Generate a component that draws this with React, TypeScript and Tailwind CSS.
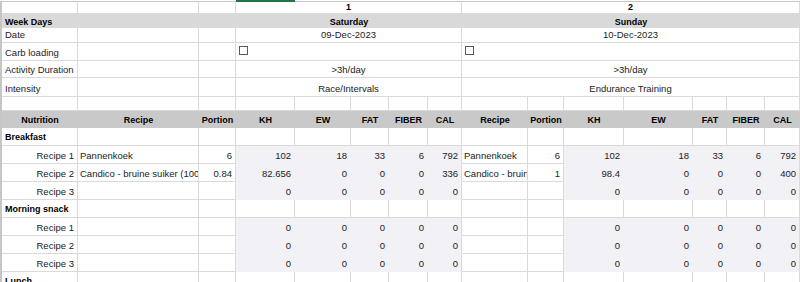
import React from 'react';

type Cell = {
  t?: React.ReactNode;
  span?: 1 | 3 | 5 | 7;
  align?: 'l' | 'r' | 'c' | 'b';
  bold?: boolean;
  shade?: boolean;
  edge?: boolean;
};

const GRID =
  'grid grid-cols-[76px_121px_37px_59px_56px_38px_39px_34px_66px_36px_60px_69px_34px_38px_35px]';

const SPAN: Record<number, string> = {
  1: '',
  3: 'col-span-3',
  5: 'col-span-5',
  7: 'col-span-7',
};

const ALIGN: Record<string, string> = {
  l: 'justify-start pl-[3px]',
  b: 'justify-start pl-[2px]',
  r: 'justify-end pr-[3px]',
  c: 'justify-center',
};

const cellClass = (c: Cell, band: boolean, v: string) => {
  const parts = [
    'flex overflow-hidden whitespace-nowrap',
    v,
    SPAN[c.span ?? 1],
    ALIGN[c.align ?? 'l'],
    c.bold ? 'font-bold text-[9px] text-black' : '',
  ];
  if (!band) {
    if (c.shade) {
      parts.push('bg-[#f2f1f6] border-b border-r border-b-[#f2f1f6]');
      parts.push(c.edge ? 'border-r-[#dadada]' : 'border-r-[#f2f1f6]');
    } else {
      parts.push('border-b border-r border-[#dadada]');
    }
  }
  return parts.join(' ');
};

const Row = ({
  h,
  cells,
  band,
  v = 'items-end pb-px leading-[13px]',
}: {
  h: string;
  cells: Cell[];
  band?: string;
  v?: string;
}) => (
  <div className={`${GRID} ${h} ${band ?? ''}`}>
    {cells.map((c, i) => (
      <div key={i} className={cellClass(c, !!band, v)}>
        {c.t}
      </div>
    ))}
  </div>
);

const Checkbox = () => (
  <span className="mb-[4px] block h-[9px] w-[9px] border border-[#5a5a5a] bg-white" />
);

const empty = (n: number): Cell[] => Array.from({ length: n }, () => ({}));

// one day block: recipe, portion, KH, EW, FAT, FIBER, CAL
const day = (recipe: string, portion: string, vals: string[]): Cell[] => [
  { t: recipe, align: 'b' },
  { t: portion, align: 'r' },
  ...vals.map((v, i) => ({ t: v, align: 'r' as const, shade: true, edge: i === vals.length - 1 })),
];

const recipeRow = (label: string, d1: Cell[], d2: Cell[]): Cell[] => [
  { t: label, align: 'r' },
  ...d1,
  ...d2,
];

const zeros = ['0', '0', '0', '0', '0'];

const heads = ['Nutrition', 'Recipe', 'Portion', 'KH', 'EW', 'FAT', 'FIBER', 'CAL', 'Recipe', 'Portion', 'KH', 'EW', 'FAT', 'FIBER', 'CAL'];

export default function App() {
  return (
    <div className="h-[282px] w-[800px] overflow-hidden bg-white font-['Liberation_Sans',Arial,sans-serif] text-[9.5px] text-[#222]">
      {/* column header edge with selected column */}
      <div className="flex h-[2px]">
        <div className="w-[236px] border-b border-[#c6c6c6]" />
        <div className="w-[59px] bg-[#217346]" />
        <div className="flex-1 border-b border-[#c6c6c6]" />
      </div>
      <div className="border-l-2 border-[#c6c6c6]">
        <Row
          h="h-[12px]"
          v="items-center leading-[11px]"
          cells={[{}, {}, {}, { t: '1', span: 5, align: 'c', bold: true }, { t: '2', span: 7, align: 'c', bold: true }]}
        />
        <Row
          h="h-[14px]"
          band="bg-[#d9d9d9]"
          v="items-end leading-[11px]"
          cells={[
            { t: 'Week Days', span: 3, bold: true },
            { t: 'Saturday', span: 5, align: 'c', bold: true },
            { t: 'Sunday', span: 7, align: 'c', bold: true },
          ]}
        />
        <Row
          h="h-[15px]"
          v="items-end pb-px leading-[12px]"
          cells={[{ t: 'Date' }, {}, {}, { t: '09-Dec-2023', span: 5, align: 'c' }, { t: '10-Dec-2023', span: 7, align: 'c' }]}
        />
        <Row
          h="h-[18px]"
          cells={[{ t: 'Carb loading' }, {}, {}, { t: <Checkbox />, span: 5 }, { t: <Checkbox />, span: 7 }]}
        />
        <Row
          h="h-[17px]"
          cells={[{ t: 'Activity Duration' }, {}, {}, { t: '>3h/day', span: 5, align: 'c' }, { t: '>3h/day', span: 7, align: 'c' }]}
        />
        <Row
          h="h-[19px]"
          cells={[{ t: 'Intensity' }, {}, {}, { t: 'Race/Intervals', span: 5, align: 'c' }, { t: 'Endurance Training', span: 7, align: 'c' }]}
        />
        <Row h="h-[14px]" cells={empty(15)} />
        <Row
          h="h-[17px]"
          band="bg-[#c9c9c9]"
          cells={heads.map((t) => ({ t, align: 'c' as const, bold: true }))}
        />

        <Row h="h-[18px]" cells={[{ t: 'Breakfast', bold: true }, ...empty(14)]} />
        <Row
          h="h-[18px]"
          cells={recipeRow(
            'Recipe 1',
            day('Pannenkoek', '6', ['102', '18', '33', '6', '792']),
            day('Pannenkoek', '6', ['102', '18', '33', '6', '792']),
          )}
        />
        <Row
          h="h-[18px]"
          cells={recipeRow(
            'Recipe 2',
            day('Candico - bruine suiker (100', '0.84', ['82.656', '0', '0', '0', '336']),
            day('Candico - bruin', '1', ['98.4', '0', '0', '0', '400']),
          )}
        />
        <Row h="h-[18px]" cells={recipeRow('Recipe 3', day('', '', zeros), day('', '', zeros))} />

        <Row h="h-[18px]" cells={[{ t: 'Morning snack', bold: true }, ...empty(14)]} />
        <Row h="h-[18px]" cells={recipeRow('Recipe 1', day('', '', zeros), day('', '', zeros))} />
        <Row h="h-[18px]" cells={recipeRow('Recipe 2', day('', '', zeros), day('', '', zeros))} />
        <Row h="h-[18px]" cells={recipeRow('Recipe 3', day('', '', zeros), day('', '', zeros))} />

        <Row h="h-[18px]" cells={[{ t: 'Lunch', bold: true }, ...empty(14)]} />
      </div>
    </div>
  );
}
